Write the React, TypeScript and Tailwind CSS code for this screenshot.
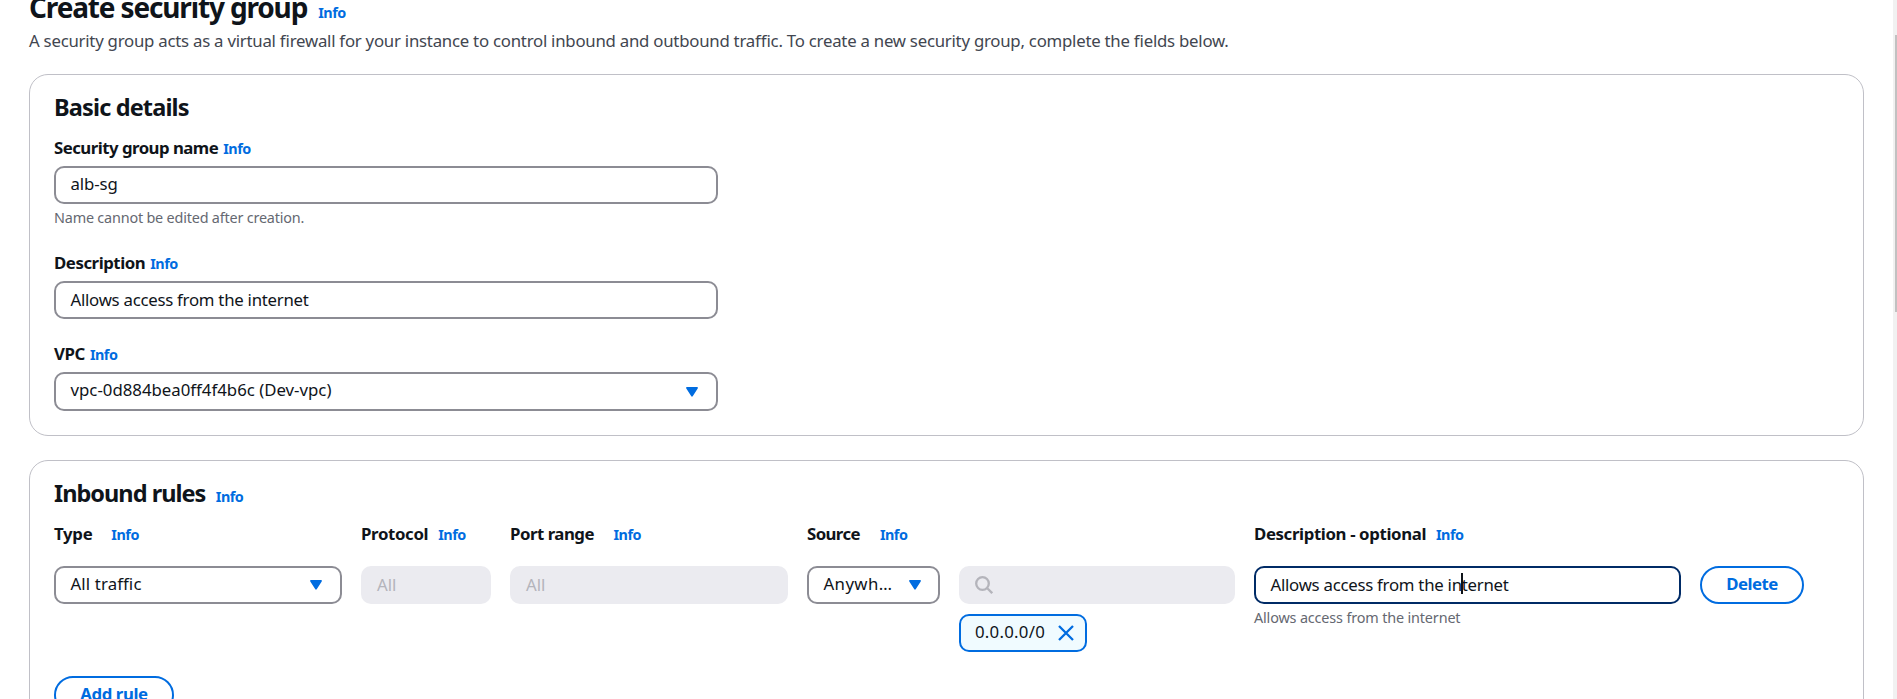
import type { ReactNode } from "react";

function Info() {
  return <a className="text-[14.4px] font-bold tracking-[-0.5px] text-[#006ce0]">Info</a>;
}

function Label({ text, tracking = "tracking-[-0.48px]", gap }: { text: string; tracking?: string; gap: string }) {
  return (
    <div className={`flex h-6 items-baseline leading-6 ${gap}`}>
      <span className={`text-[16.8px] font-bold whitespace-nowrap ${tracking}`}>{text}</span>
      <Info />
    </div>
  );
}

function Caret() {
  return (
    <svg viewBox="0 0 12 10" className="h-[10px] w-3 shrink-0 fill-[#006ce0]">
      <path d="M1 0h10c.9 0 1.2.8.7 1.4L6.7 9.3c-.4.6-1 .6-1.4 0L.3 1.4C-.2.8.1 0 1 0z" />
    </svg>
  );
}

function Field({
  children,
  border = "border-[#8c8c94]",
  height = "h-[38px]",
  className = "",
}: {
  children: ReactNode;
  border?: string;
  height?: string;
  className?: string;
}) {
  return (
    <div className={`flex items-center rounded-[10px] border-2 bg-white pl-[14.5px] text-[16.8px] whitespace-nowrap ${border} ${height} ${className}`}>
      {children}
    </div>
  );
}

function Disabled({ children }: { children: ReactNode }) {
  return (
    <div className="flex h-[38px] items-center rounded-[10px] bg-[#ebebf0] px-4 text-[16.8px] text-[#b4b4bb]">
      {children}
    </div>
  );
}

export default function App() {
  return (
    <div className="flex h-[699px] w-full overflow-hidden bg-white font-['Noto_Sans','Open_Sans',sans-serif] text-[#0f141a] [font-feature-settings:'liga'_1]">
      <main className="min-w-0 flex-1 pr-[29px] pl-[29px]">
        <header className="-mt-[11px]">
          <div className="flex h-10 items-baseline gap-[11px] leading-9">
            <h1 className="text-[28px] leading-[37px] font-bold tracking-[-1.15px]">Create security group</h1>
            <Info />
          </div>
          <p className="h-6 text-[16.8px] leading-6 tracking-[-0.24px] whitespace-nowrap text-[#424650]">
            A security group acts as a virtual firewall for your instance to control inbound and outbound traffic. To create a new security group, complete the fields below.
          </p>
        </header>

        <section className="mt-[21px] h-[362px] rounded-[19px] border border-[#c0c0c7] px-6 pt-[17px]">
          <h2 className="text-[23.5px] leading-[30px] font-bold tracking-[-0.85px]">Basic details</h2>
          <div className="mt-[14px] w-[664px]">
            <Label text="Security group name" tracking="tracking-[-0.52px]" gap="gap-[5px]" />
            <Field className="mt-[6px]"><span className="pb-[2px] tracking-[-0.1px]">alb-sg</span></Field>
            <p className="mt-[5px] h-[17px] text-[14.4px] leading-[18px] tracking-[-0.19px] text-[#656871]">Name cannot be edited after creation.</p>
          </div>
          <div className="mt-[25px] w-[664px]">
            <Label text="Description" tracking="tracking-[-0.45px]" gap="gap-[5px]" />
            <Field className="mt-[6px]"><span className="tracking-[-0.26px]">Allows access from the internet</span></Field>
          </div>
          <div className="mt-[23px] w-[664px]">
            <Label text="VPC" tracking="tracking-[-0.4px]" gap="gap-[5px]" />
            <Field height="h-[39px]" className="mt-[6px] justify-between pr-[18px]">
              <span className="pb-[3px]">vpc-0d884bea0ff4f4b6c (Dev-vpc)</span>
              <Caret />
            </Field>
          </div>
        </section>

        <section className="mt-6 h-[300px] rounded-[19px] border border-[#c0c0c7] px-6 pt-[17px]">
          <div className="flex items-baseline gap-[10.5px]">
            <h2 className="text-[23.5px] leading-[30px] font-bold tracking-[-0.98px]">Inbound rules</h2>
            <Info />
          </div>
          <div className="mt-[14px] grid grid-cols-[288px_130px_278px_428px_427px_104px] gap-x-[19px]">
            <Label text="Type" tracking="tracking-[-0.3px]" gap="gap-[19px]" />
            <Label text="Protocol" tracking="tracking-[-0.35px]" gap="gap-[10px]" />
            <Label text="Port range" gap="gap-[19.5px]" />
            <Label text="Source" tracking="tracking-[-0.6px]" gap="gap-[20px]" />
            <Label text="Description - optional" tracking="tracking-[-0.37px]" gap="gap-[10px]" />
          </div>
          <div className="mt-5 grid h-[110px] grid-cols-[288px_130px_278px_428px_427px_104px] items-start gap-x-[19px]">
            <Field className="justify-between pr-[18px]">
              <span className="pb-[2px] tracking-[0.15px]">All traffic</span>
              <Caret />
            </Field>
            <Disabled><span>All</span></Disabled>
            <Disabled><span>All</span></Disabled>
            <div className="grid grid-cols-[133px_276px] gap-x-[19px] gap-y-[10px]">
              <Field className="justify-between pr-[17px]">
                <span className="pb-[2px] tracking-[0.4px]">Anywh…</span>
                <Caret />
              </Field>
              <Disabled>
                <svg viewBox="0 0 18 18" className="h-[18px] w-[18px] fill-none stroke-[#b4b4bb] stroke-[2.3]">
                  <circle cx="7.5" cy="7.5" r="6.3" />
                  <path d="M12 12l5.2 5.2" />
                </svg>
              </Disabled>
              <div className="col-start-2 flex h-[38px] w-32 items-center justify-between rounded-[10px] border-2 border-[#006ce0] bg-[#f0fbff] pr-[11px] pl-[14px] text-[16.8px]">
                <span className="pb-[2px] tracking-[0.25px]">0.0.0.0/0</span>
                <svg viewBox="0 0 16 16" className="h-4 w-4 fill-none stroke-[#006ce0] stroke-[2.3]">
                  <path d="M1 1l14 14M15 1L1 15" />
                </svg>
              </div>
            </div>
            <div>
              <Field border="border-[#002b66]">
                <span className="relative tracking-[-0.26px]">
                  Allows access from the internet
                  <i className="absolute top-px left-[190.5px] h-[21px] w-[2px] bg-[#0f141a]" />
                </span>
              </Field>
              <p className="mt-[5px] h-[18px] text-[14.4px] leading-[18px] tracking-[-0.15px] text-[#656871]">Allows access from the internet</p>
            </div>
            <button className="h-[38px] rounded-full border-2 border-[#006ce0] pb-[2px] text-[16.8px] font-bold tracking-[-0.5px] text-[#006ce0]">Delete</button>
          </div>
          <button className="h-[38px] w-[120px] rounded-full border-2 border-[#006ce0] pb-[2px] text-[16.8px] font-bold tracking-[-0.4px] text-[#006ce0]">Add rule</button>
        </section>
      </main>
      <div className="w-1 bg-[#f1f1f1] pt-[35px] pl-[2px]">
        <div className="h-[277px] bg-[#c1c1c1]" />
      </div>
    </div>
  );
}
